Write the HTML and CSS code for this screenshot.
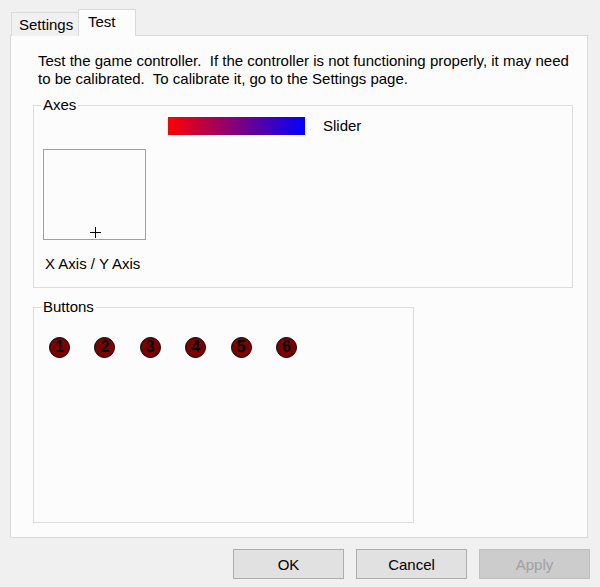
FILE: index.html
```html
<!DOCTYPE html>
<html>
<head>
<meta charset="utf-8">
<link rel="stylesheet" href="styles.css">
</head>
<body>
<div class="dialog">
  <div class="tabs">
    <div class="tab">Settings</div>
    <div class="tab active">Test</div>
  </div>
  <div class="panel">
    <p class="intro">Test the game controller.&nbsp; If the controller is not functioning properly, it may need to be calibrated.&nbsp; To calibrate it, go to the Settings page.</p>
    <fieldset class="group axes">
      <legend>Axes</legend>
      <div class="slider-row">
        <div class="slider"></div>
        <span class="slider-label">Slider</span>
      </div>
      <div class="xy-box">
        <svg class="cross" width="11" height="11" viewBox="0 0 11 11"><path d="M5.5 0V11M0 5.5H11" stroke="#000" stroke-width="1"/></svg>
      </div>
      <div class="xy-label">X Axis / Y Axis</div>
    </fieldset>
    <fieldset class="group buttons">
      <legend>Buttons</legend>
      <div class="btn-row">
        <span class="jbtn">1</span>
        <span class="jbtn">2</span>
        <span class="jbtn">3</span>
        <span class="jbtn">4</span>
        <span class="jbtn">5</span>
        <span class="jbtn">6</span>
      </div>
    </fieldset>
  </div>
  <div class="actions">
    <button class="btn">OK</button>
    <button class="btn">Cancel</button>
    <button class="btn disabled">Apply</button>
  </div>
</div>
</body>
</html>
```
FILE: styles.css
```css
html, body {
  margin: 0;
  padding: 0;
  background: #f0f0f0;
}
body {
  width: 600px;
  height: 587px;
  overflow: hidden;
  font-family: "Liberation Sans", Arial, sans-serif;
  font-size: 15px;
  color: #000;
}
.dialog {
  padding: 9px 0 0 10px;
}
.tabs {
  display: flex;
  align-items: flex-end;
  height: 27px;
  margin-bottom: -1px;
  position: relative;
  z-index: 1;
}
.tab {
  box-sizing: border-box;
  height: 24px;
  padding: 3px 5px 0 7px;
  line-height: 18px;
  border: 1px solid #d9d9d9;
  border-bottom: none;
  background: #f0f0f0;
  margin-left: 1px;
  width: 68px;
}
.tab.active {
  height: 27px;
  width: 58px;
  margin-left: -1px;
  padding: 3px 0 0 9px;
  background: #fcfcfc;
}
.panel {
  box-sizing: border-box;
  width: 578px;
  height: 503px;
  border: 1px solid #d9d9d9;
  background: #fcfcfc;
  padding: 16px 13px 0 22px;
}
.intro {
  margin: 0;
  padding-left: 5px;
  line-height: 18px;
  width: 540px;
}
.group {
  margin: 8px 0 0 0;
  padding: 0;
  border: 1px solid #dcdcdc;
  min-width: 0;
}
.group legend {
  margin-left: 7px;
  padding: 0 2px;
  line-height: 18px;
}
.axes {
  width: 540px;
  box-sizing: border-box;
  padding-bottom: 14px;
}
.slider-row {
  display: flex;
  align-items: center;
  margin-top: 3px;
  padding-left: 134px;
  height: 18px;
}
.slider {
  width: 137px;
  height: 18px;
  background: linear-gradient(to right, #ff0000, #0000ff);
}
.slider-label {
  margin-left: 18px;
  line-height: 18px;
}
.xy-box {
  box-sizing: border-box;
  width: 103px;
  height: 91px;
  margin: 14px 0 0 9px;
  border: 1px solid #a0a0a0;
  background: #fcfcfc;
  display: flex;
  justify-content: center;
  align-items: flex-end;
  padding-bottom: 1px;
}
.cross {
  display: block;
  margin-left: 1px;
}
.xy-label {
  margin: 15px 0 0 11px;
  line-height: 18px;
}
.buttons {
  width: 381px;
  height: 225px;
  box-sizing: border-box;
  margin-top: 10px;
}
.btn-row {
  display: flex;
  gap: 24.4px;
  padding: 21px 0 0 15px;
}
.jbtn {
  box-sizing: border-box;
  width: 21px;
  height: 21px;
  border-radius: 50%;
  background: #7d0000;
  border: 1.5px solid #000;
  color: #000;
  font-weight: bold;
  font-size: 16px;
  line-height: 18px;
  text-align: center;
}
.actions {
  display: flex;
  gap: 12px;
  justify-content: flex-end;
  margin-top: 11px;
  padding-right: 10px;
}
.btn {
  box-sizing: border-box;
  width: 111px;
  height: 30px;
  background: #e1e1e1;
  border: 1px solid #adadad;
  font-family: "Liberation Sans", Arial, sans-serif;
  font-size: 15px;
  color: #000;
  padding: 0;
  margin: 0;
}
.btn.disabled {
  background: #cccccc;
  border-color: #bfbfbf;
  color: #a0a0a0;
}
```
